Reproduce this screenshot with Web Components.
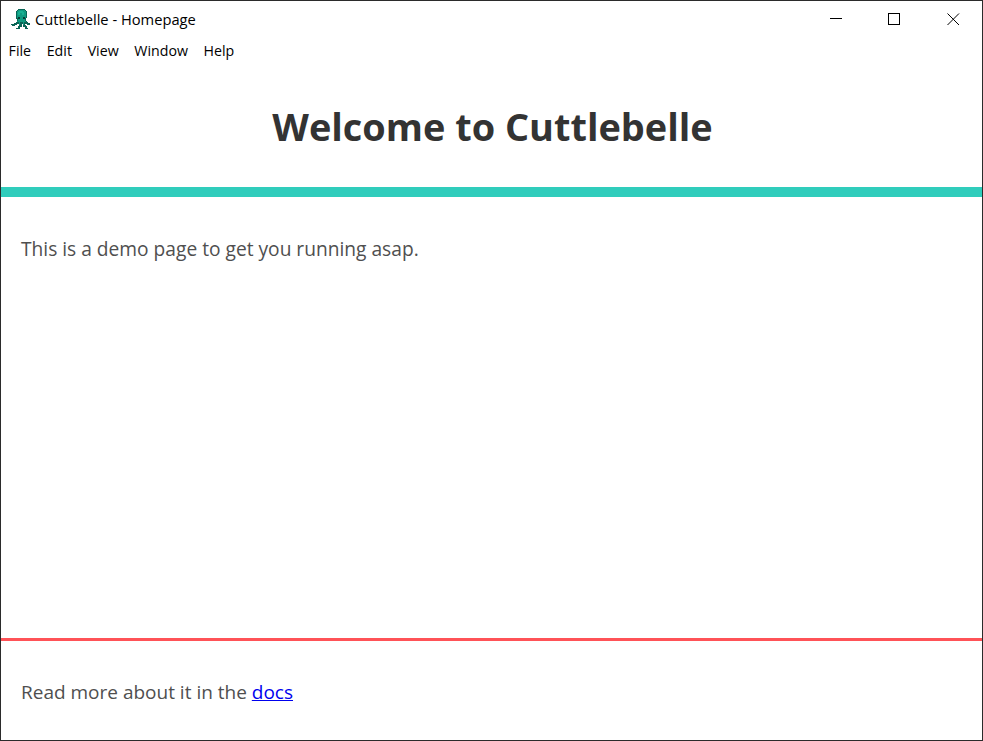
<!DOCTYPE html>
<html>
<head>
<meta charset="utf-8">
<title>Cuttlebelle - Homepage</title>
<style>
  html, body { margin: 0; height: 100%; background: #fff; }
</style>
</head>
<body>
<app-window>
  <title-bar slot="title" heading="Cuttlebelle - Homepage"></title-bar>
  <menu-bar slot="menu">
    <menu-item>File</menu-item>
    <menu-item>Edit</menu-item>
    <menu-item>View</menu-item>
    <menu-item>Window</menu-item>
    <menu-item>Help</menu-item>
  </menu-bar>
  <page-header slot="header">Welcome to Cuttlebelle</page-header>
  <page-main slot="main">This is a demo page to get you running asap.</page-main>
  <page-footer slot="footer">Read more about it in the <a href="#docs" style="color:#00e">docs</a></page-footer>
</app-window>

<script>
const FONT = '"Open Sans", "Noto Sans", "Liberation Sans", sans-serif';

class AppWindow extends HTMLElement {
  constructor() {
    super();
    this.attachShadow({ mode: 'open' }).innerHTML = `
      <style>
        :host {
          display: flex;
          flex-direction: column;
          box-sizing: border-box;
          width: 983px;
          height: 741px;
          border: 1px solid #2b2b2b;
          background: #fff;
          overflow: hidden;
          font-family: ${FONT};
        }
      </style>
      <slot name="title"></slot>
      <slot name="menu"></slot>
      <slot name="header"></slot>
      <slot name="main"></slot>
      <slot name="footer"></slot>
    `;
  }
}

class TitleBar extends HTMLElement {
  constructor() {
    super();
    this.attachShadow({ mode: 'open' }).innerHTML = `
      <style>
        :host {
          display: flex;
          align-items: center;
          height: 35px;
          padding-left: 10px;
          color: #000;
          font-size: 14.700px;
        }
        .icon { width: 20px; height: 21px; margin-right: 4px; flex: none; }
        .text { flex: 1; }
        .controls { display: flex; align-self: flex-start; }
        .controls svg { display: block; width: 59px; height: 35px; }
      </style>
      <svg class="icon" viewBox="0 0 20 21" shape-rendering="crispEdges">
        <path fill="#0a6455" d="M7 1h7v1h1v1h1v7h-1v3h1v1h1v1h2v2h-3v-1h-2v1h1v1h1v2h1v1h-3v-2h-2v-3h-1v3H9v2H8v1H6v-1H5v-1h2v-2h1v-2H6v1H4v1H1v-1H0v-1h3v-1h2v-1h1v-3H5V3h1V2h1z"/>
        <path fill="#0f9a80" d="M7 2h7v1h1v7h-1v3h1v1h-2v3h-1v-3h-3v3H8v-3H6v-1h1v-3H6V3h1z"/>
        <path fill="#18b092" d="M8 3h4v1h1v3h-2V5H9v2H7V4h1z"/>
        <path fill="#063d35" d="M7 9h2v2H7zM12 9h2v2h-2z"/>
      </svg>
      <span class="text">${this.getAttribute('heading')}</span>
      <div class="controls">
        <svg viewBox="0 0 59 35" shape-rendering="crispEdges">
          <path fill="none" stroke="#000" d="M11 17.500h12"/>
        </svg>
        <svg viewBox="0 0 59 35" shape-rendering="crispEdges">
          <rect x="10.500" y="12.500" width="11" height="11" fill="none" stroke="#000"/>
        </svg>
        <svg viewBox="0 0 45 35" style="width:45px">
          <path fill="none" stroke="#000" d="M10.500 12.500l11.500 11.500M22 12.500L10.500 24"/>
        </svg>
      </div>
    `;
  }
}

class MenuBar extends HTMLElement {
  constructor() {
    super();
    this.attachShadow({ mode: 'open' }).innerHTML = `
      <style>
        :host {
          display: flex;
          gap: 15.700px;
          height: 28px;
          padding-left: 7.600px;
          align-items: center;
          font-size: 14.200px;
          color: #000;
        }
      </style>
      <slot></slot>
    `;
  }
}

class MenuItem extends HTMLElement {
  constructor() {
    super();
    this.attachShadow({ mode: 'open' }).innerHTML = `
      <style>:host { display: block; }</style>
      <slot></slot>
    `;
  }
}

class PageHeader extends HTMLElement {
  constructor() {
    super();
    this.attachShadow({ mode: 'open' }).innerHTML = `
      <style>
        :host {
          display: block;
          height: 133px;
          box-sizing: border-box;
          border-bottom: 10px solid #30cdbc;
        }
        h1 {
          margin: 0;
          padding: 35px 0 0 2px;
          text-align: center;
          font-size: 37.900px;
          line-height: 54px;
          font-weight: 700;
          color: #333;
        }
      </style>
      <h1><slot></slot></h1>
    `;
  }
}

class PageMain extends HTMLElement {
  constructor() {
    super();
    this.attachShadow({ mode: 'open' }).innerHTML = `
      <style>
        :host {
          display: block;
          flex: 1;
          padding: 38px 20px 0;
          font-size: 19.180px;
          line-height: 28px;
          color: #4f4f4f;
        }
      </style>
      <slot></slot>
    `;
  }
}

class PageFooter extends HTMLElement {
  constructor() {
    super();
    this.attachShadow({ mode: 'open' }).innerHTML = `
      <style>
        :host {
          display: block;
          box-sizing: border-box;
          height: 102px;
          padding: 37px 20px 0;
          border-top: 3px solid #ff5257;
          font-size: 19px;
          line-height: 28px;
          color: #4f4f4f;
        }
      </style>
      <slot></slot>
    `;
  }
}

customElements.define('app-window', AppWindow);
customElements.define('title-bar', TitleBar);
customElements.define('menu-bar', MenuBar);
customElements.define('menu-item', MenuItem);
customElements.define('page-header', PageHeader);
customElements.define('page-main', PageMain);
customElements.define('page-footer', PageFooter);
</script>
</body>
</html>
